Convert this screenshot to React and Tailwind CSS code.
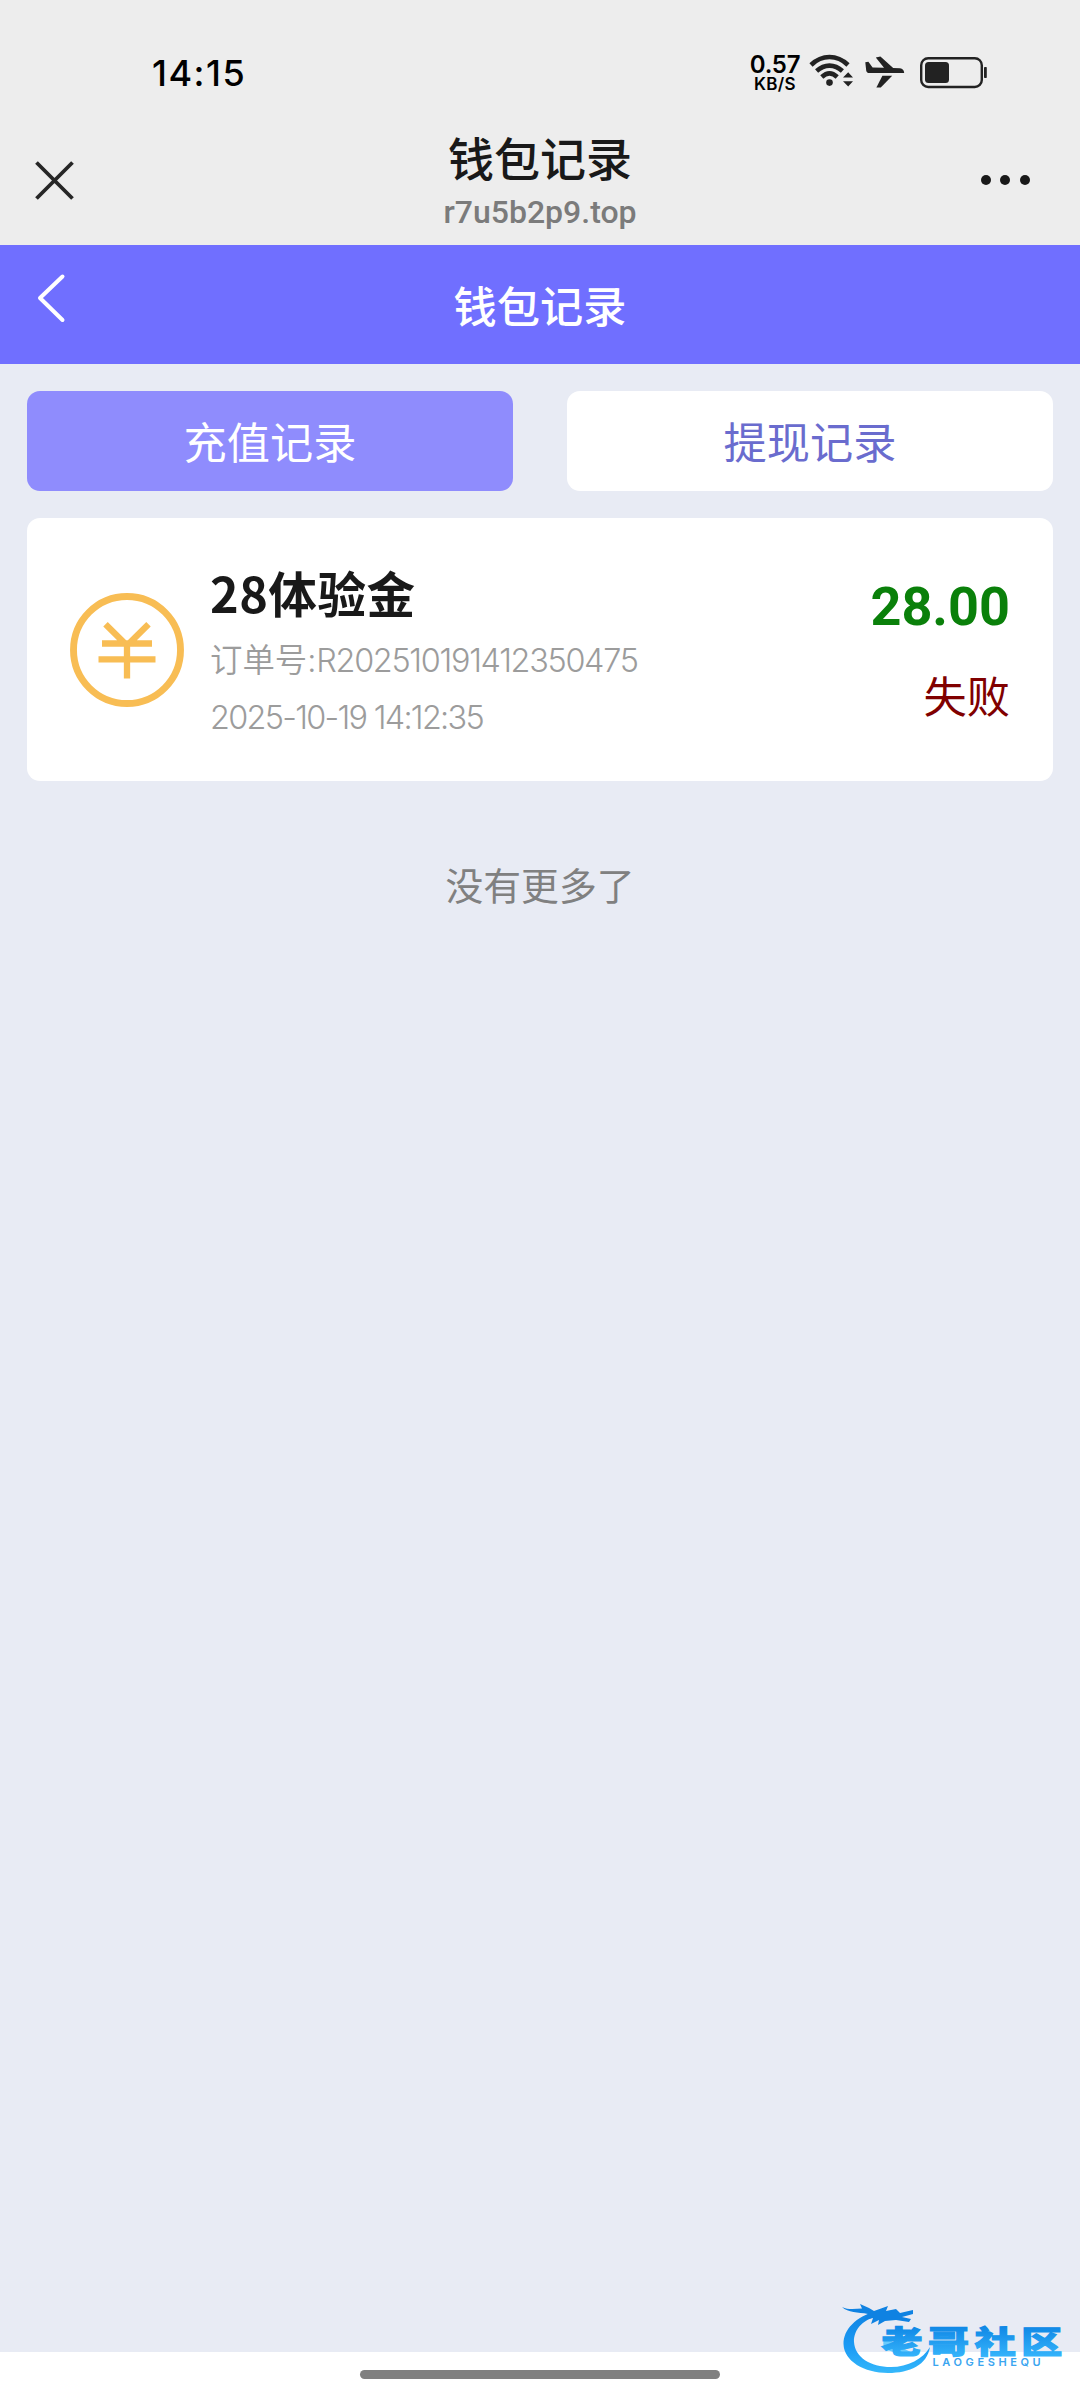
import { useState } from 'react';

const records = [
  {
    id: 'R202510191412350475',
    type: 'recharge',
    title: '28体验金',
    time: '2025-10-19 14:12:35',
    amount: '28.00',
    status: '失败'
  }
];

const tabs = [
  { key: 'recharge', label: '充值记录' },
  { key: 'withdraw', label: '提现记录' }
];

const WifiIcon = () => (
  <svg width="44" height="36" viewBox="0 0 44 36" fill="none" stroke="#222" strokeWidth="4.6">
    <path d="M2 13C13 2.400 28 2.400 39 13" />
    <path d="M7.600 19C15.500 11.800 25.500 11.800 33.400 19" />
    <path d="M12.800 25C17.800 20.400 23.200 20.400 28.200 25" />
    <circle cx="20.500" cy="30.600" r="3.300" fill="#222" stroke="none" />
    <path d="M34 25.600L39.200 20.200L44 25.600ZM34 29.200L39.200 34.600L44 29.200Z" fill="#222" stroke="none" />
  </svg>
);

const PlaneIcon = () => (
  <svg width="40" height="33" viewBox="0 0 40 33" fill="#222">
    <path d="M0.3 6.2L3.4 5.8L7.6 11.6L19 11.8L10.8 1.4L15.4 0.6L28.2 11.9L35 12.2C37.6 12.5 39 14 39.2 16.9L4.6 17C2.6 17 1.6 16.2 1.2 14.4Z" />
    <path d="M17.4 19.8H27.2L15.8 31.6L11.4 31.4Z" />
  </svg>
);

const BatteryIcon = () => (
  <svg width="68" height="32" viewBox="0 0 68 32">
    <rect x="1.2" y="1.2" width="60.6" height="28.8" rx="7" fill="none" stroke="#222" strokeWidth="2.4" />
    <rect x="5" y="5" width="24" height="21" rx="3.5" fill="#222" />
    <rect x="64" y="10" width="2.8" height="11" rx="0.8" fill="#222" />
  </svg>
);

const CoinIcon = () => (
  <svg width="114" height="114" viewBox="0 0 114 114" fill="none" stroke="#f8bd54" strokeWidth="6.900" className="shrink-0">
    <circle cx="57" cy="57" r="53.500" />
    <path d="M35.500 31.200L57 52.600L78.500 31.200M32 50.500H82M28.500 66.300H85.500M57 50V85.500" strokeWidth="6.300" />
  </svg>
);

const Watermark = () => (
  <svg width="230" height="80" viewBox="0 0 230 80" className="absolute bottom-[21px] right-[12px]">
    <defs>
      <linearGradient id="wmText" x1="0" y1="0" x2="0" y2="1">
        <stop offset="0.15" stopColor="#0d84e4" />
        <stop offset="0.9" stopColor="#35b4fb" />
      </linearGradient>
      <linearGradient id="wmBody" x1="0" y1="0" x2="0" y2="1">
        <stop offset="0" stopColor="#0f82e2" />
        <stop offset="0.6" stopColor="#1c9cf5" />
        <stop offset="1" stopColor="#35b8fb" />
      </linearGradient>
    </defs>
    <path
      d="M38 12C18 18 5.500 30 5.500 45C6 62 26 74 50 74C72 74 89 66 92 48C85 60 70 68 53 68C32 68 17 58 16 43C15.500 30 26 19 44 16Z"
      fill="url(#wmBody)"
    />
    <path
      d="M4 8C10 11 17 10 24 9.500L22 5L31 9L36 12L50 7L48 12L58 10L62 14L75 11L75 15L64 18L73 20L71 23L58 21L47 22L40 26L41 21L33 25L35 19L26 21L30 15C20 13 10 14 4 8Z"
      fill="#0f82e2"
    />
    <path d="M48 38C40 48 50 56 75 54L60 47Z" fill="#69cbfd" />
    <g fill="url(#wmText)" stroke="url(#wmText)" strokeWidth="1.600">
      <text
        x="43.500"
        y="73"
        transform="scale(1 0.74)"
        className="font-['Noto_Sans_CJK_SC',sans-serif] text-[41px] font-black tracking-[5.600px]"
      >
        老哥社区
      </text>
    </g>
    <text x="94.500" y="67" fill="#3aa5f0" className="font-['Inter',sans-serif] text-[11px] font-semibold tracking-[3.600px]">
      LAOGESHEQU
    </text>
  </svg>
);

const StatusBar = () => (
  <div className="flex h-[120px] items-start justify-between pl-[152px] pr-[92px] pt-[52px] text-black">
    <div className="font-['Inter',sans-serif] text-[36px] font-medium leading-[42px] tracking-[1.500px]">14:15</div>
    <div className="flex items-start">
      <div className="flex w-[50px] flex-col items-center font-['Inter',sans-serif] font-semibold">
        <span className="text-[24px] leading-[26px] tracking-[-0.300px]">0.57</span>
        <span className="text-[17px] leading-[13px] tracking-[0.300px]">KB/S</span>
      </div>
      <div className="ml-[9px]"><WifiIcon /></div>
      <div className="ml-[12px] mt-[4px]"><PlaneIcon /></div>
      <div className="ml-[15px] mt-[5px]"><BatteryIcon /></div>
    </div>
  </div>
);

const BrowserBar = () => (
  <div className="flex h-[125px] justify-between px-[35px] text-[#191919]">
    <button type="button" className="mt-[41px] h-[39px] w-[80px]">
      <svg width="39" height="39" viewBox="0 0 39 39" fill="none" stroke="#262626" strokeWidth="3.8">
        <path d="M1.500 1.500L37.500 37.500M37.500 1.500L1.500 37.500" />
      </svg>
    </button>
    <div className="flex flex-col items-center pt-[11px]">
      <div className="text-[46px] font-medium leading-[50px]">钱包记录</div>
      <div className="mt-[12px] font-['Roboto',sans-serif] text-[32px] font-medium leading-[38px] text-[#7b7b7b]">r7u5b2p9.top</div>
    </div>
    <button type="button" className="mt-[55px] flex h-[11px] w-[80px] justify-end gap-[9.500px] pr-[15.500px]">
      <i className="size-[10px] rounded-full bg-[#191919]" />
      <i className="size-[10px] rounded-full bg-[#191919]" />
      <i className="size-[10px] rounded-full bg-[#191919]" />
    </button>
  </div>
);

const App = () => {
  const [active, setActive] = useState('recharge');
  const list = records.filter((item) => item.type === active);

  return (
    <div className="relative flex h-[2400px] w-[1080px] flex-col overflow-hidden bg-[#e8ebf4] font-['Noto_Sans_CJK_SC',sans-serif]">
      <header className="bg-[#ededed]">
        <StatusBar />
        <BrowserBar />
      </header>

      <div className="flex h-[119px] justify-between bg-[#706fff] px-[36px] text-white">
        <button type="button" className="mt-[28px] h-[50px] w-[60px]">
          <svg width="30" height="50" viewBox="0 0 30 50" fill="none" stroke="currentColor" strokeWidth="4" strokeLinecap="round" strokeLinejoin="round">
            <path d="M26.500 3.500L4 25L26.500 47" />
          </svg>
        </button>
        <h1 className="pt-[29px] text-[43.200px] font-medium leading-[60px]">钱包记录</h1>
        <div className="w-[60px]" />
      </div>

      <main className="flex-1 px-[27px] pt-[27px]">
        <div className="grid grid-cols-2 gap-[54px]">
          {tabs.map((tab) => (
            <button
              key={tab.key}
              type="button"
              onClick={() => setActive(tab.key)}
              className={`h-[100px] rounded-[13px] pb-[2px] text-[43.200px] leading-[98px] ${
                active === tab.key ? 'bg-[#8f8cfd] text-white' : 'bg-white text-[#6a6cce]'
              }`}
            >
              {tab.label}
            </button>
          ))}
        </div>

        {list.map((item) => (
          <div key={item.id} className="mt-[27px] flex h-[263px] items-center rounded-[13px] bg-white px-[43px]">
            <CoinIcon />
            <div className="ml-[26px] flex-1 pt-[8px]">
              <div className="text-[48.600px] font-bold leading-[60px] tracking-[0.500px] text-[#191919]">{item.title}</div>
              <div className="mt-[10px] font-['Inter','Noto_Sans_CJK_SC',sans-serif] text-[32.400px] font-[350] leading-[57px] text-[#9c9c9c]">
                <div>
                  订单号:<span className="tracking-[-1.300px]">{item.id}</span>
                </div>
                <div className="tracking-[-1.700px]">{item.time}</div>
              </div>
            </div>
            <div className="text-right">
              <div className="font-['Roboto',sans-serif] text-[54px] font-bold leading-[62px] text-[#0a800a]">{item.amount}</div>
              <div className="mt-[26px] text-[43.200px] leading-[60px] text-[#800000]">{item.status}</div>
            </div>
          </div>
        ))}

        <div className="mt-[75px] text-center text-[37.800px] leading-[56px] text-[#808080]">没有更多了</div>
      </main>

      <footer className="flex h-[48px] justify-center bg-white pt-[18px]">
        <div className="h-[9px] w-[360px] rounded-full bg-[#808080]" />
      </footer>

      <Watermark />
    </div>
  );
};

export default App;
